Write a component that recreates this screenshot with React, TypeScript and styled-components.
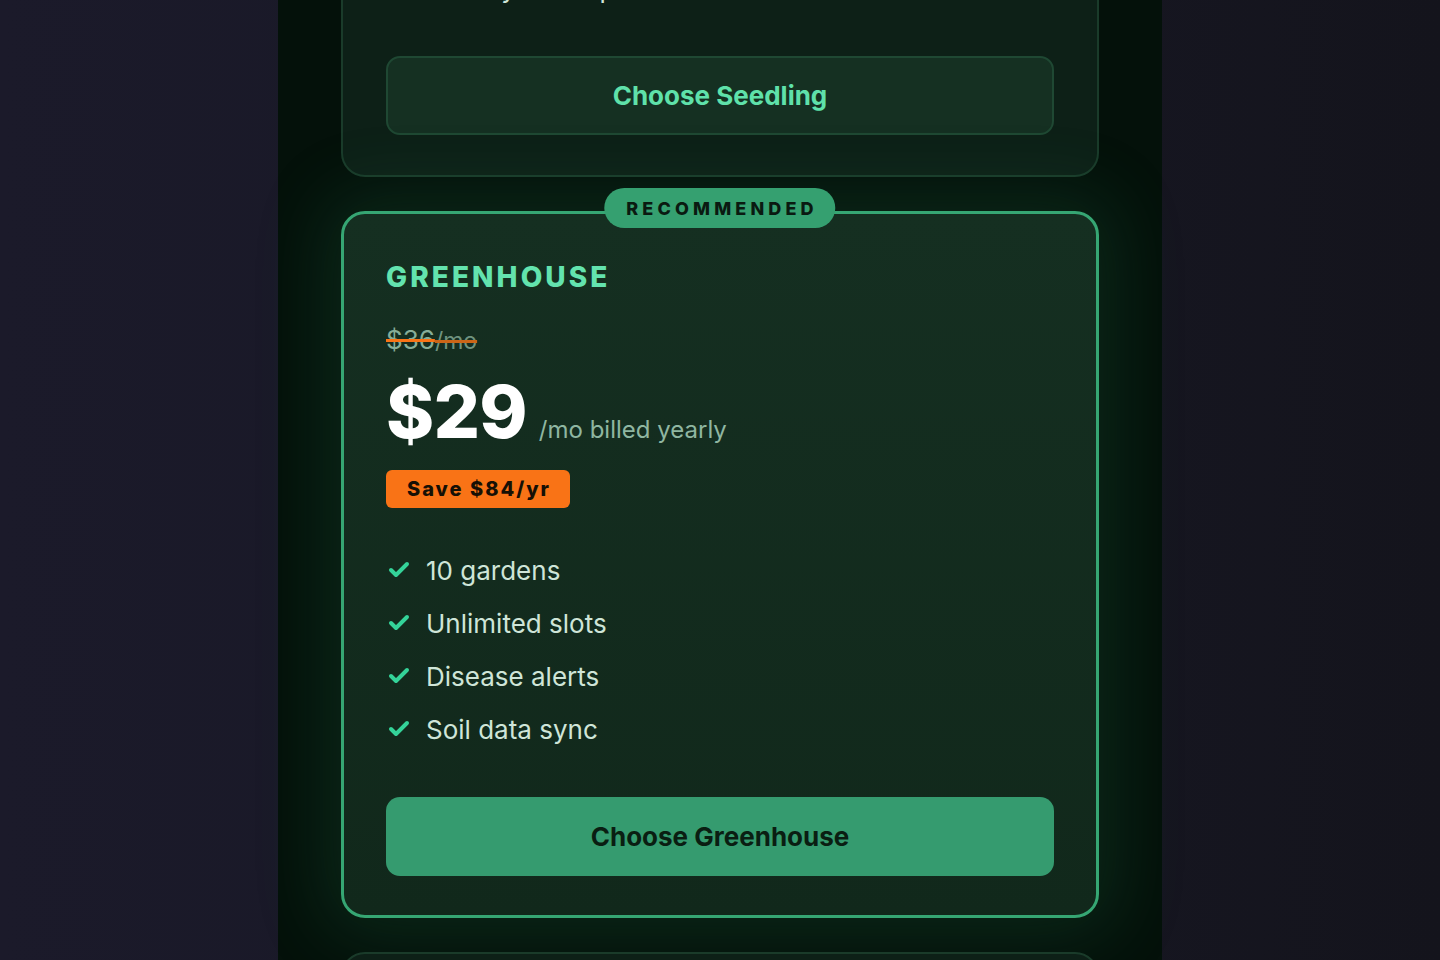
import React, { useLayoutEffect, useRef } from 'react';
import styled, { createGlobalStyle } from 'styled-components';
import { Check } from 'lucide-react';

const GlobalStyle = createGlobalStyle`
  * { box-sizing: border-box; }
  html, body { margin: 0; padding: 0; height: 100%; }
  body {
    font-family: Inter, "Noto Sans", "Liberation Sans", sans-serif;
    background: #181824;
    -webkit-font-smoothing: antialiased;
  }
  #root { height: 100%; }
`;

const Viewport = styled.div`
  height: 100vh;
  overflow-y: auto;
  scrollbar-width: none;
  background: linear-gradient(90deg, #1b1a2a 0%, #181826 50%, #14141c 100%);
  &::-webkit-scrollbar { display: none; }
`;

const Column = styled.main`
  width: 884px;
  min-height: 100%;
  margin: 0 auto;
  padding: 56px 63px 96px;
  background: #04110a;
  display: flex;
  flex-direction: column;
  gap: 34px;
`;

const PageHeading = styled.h1`
  margin: 0 0 10px;
  text-align: center;
  font-size: 34px;
  font-weight: 800;
  color: #e6f4ec;
`;

const Card = styled.section<{ $featured?: boolean }>`
  position: relative;
  display: flex;
  flex-direction: column;
  border-radius: 24px;
  padding: ${(p) => (p.$featured ? '46px 42px 39px' : '44px 43px 40px')};
  border: ${(p) => (p.$featured ? '3px solid #36a673' : '2px solid #1a3b2a')};
  background: ${(p) =>
    p.$featured ? 'linear-gradient(180deg, #152f21 0%, #11281b 100%)' : '#0d2017'};
  box-shadow: ${(p) =>
    p.$featured ? '0 0 70px 18px rgba(38, 130, 84, 0.2)' : 'none'};
`;

const Badge = styled.div`
  position: absolute;
  top: -26px;
  left: 50%;
  transform: translateX(-50%);
  height: 40px;
  padding: 0 18px 0 22px;
  border-radius: 20px;
  background: #35a070;
  color: #0a1a11;
  font-size: 18px;
  font-weight: 800;
  letter-spacing: 0.23em;
  display: flex;
  align-items: center;
  white-space: nowrap;
`;

const PlanName = styled.h2`
  margin: 0;
  font-size: 28px;
  line-height: 34px;
  font-weight: 800;
  letter-spacing: 0.11em;
  color: #63e3ae;
`;

const OldPrice = styled.div`
  margin-top: 30px;
  height: 32px;
  display: flex;
  align-items: baseline;
  line-height: 32px;
  color: #86ad98;
`;

const StrikeAmount = styled.span<{ $dim?: boolean }>`
  font-size: ${(p) => (p.$dim ? '23px' : '26px')};
  text-decoration: line-through;
  text-decoration-color: #f97316;
  text-decoration-thickness: 3px;
  opacity: ${(p) => (p.$dim ? 0.8 : 1)};
`;

const PriceRow = styled.div<{ $tight?: boolean }>`
  margin-top: ${(p) => (p.$tight ? '24px' : '20px')};
  display: flex;
  align-items: baseline;
  gap: 12px;
`;

const Amount = styled.span`
  font-size: 73px;
  line-height: 72px;
  font-weight: 800;
  letter-spacing: -0.01em;
  color: #ffffff;
`;

const Period = styled.span`
  font-size: 24px;
  color: #8fb6a1;
`;

const Savings = styled.div`
  margin-top: 22px;
  align-self: flex-start;
  height: 38px;
  padding: 0 19px 0 21px;
  border-radius: 6px;
  background: #f97316;
  color: #161005;
  font-size: 20px;
  font-weight: 800;
  letter-spacing: 0.1em;
  display: flex;
  align-items: center;
`;

const Features = styled.ul`
  list-style: none;
  margin: 44px 0 0;
  padding: 0;
  display: flex;
  flex-direction: column;
  gap: 17px;
`;

const Feature = styled.li`
  display: flex;
  align-items: center;
  gap: 15px;
  height: 36px;
  font-size: 26px;
  color: #cfe5d8;
  svg { flex: none; margin-left: 1px; }
`;

const ChooseButton = styled.button<{ $primary?: boolean }>`
  margin-top: 50px;
  height: 79px;
  width: 100%;
  border-radius: 14px;
  font-family: inherit;
  font-size: 26px;
  font-weight: 700;
  cursor: pointer;
  border: ${(p) => (p.$primary ? 'none' : '2px solid #1f4833')};
  background: ${(p) => (p.$primary ? '#359b6f' : '#153022')};
  color: ${(p) => (p.$primary ? '#0a1e12' : '#5fe1aa')};
`;

type Plan = {
  name: string;
  price: string;
  period: string;
  oldPrice?: string;
  savings?: string;
  features: string[];
  featured?: boolean;
};

const plans: Plan[] = [
  {
    name: 'SEEDLING',
    price: '$9',
    period: '/mo billed yearly',
    features: ['2 gardens', '20 slots', 'Weekly care tips'],
  },
  {
    name: 'GREENHOUSE',
    price: '$29',
    period: '/mo billed yearly',
    oldPrice: '$36',
    savings: 'Save $84/yr',
    features: ['10 gardens', 'Unlimited slots', 'Disease alerts', 'Soil data sync'],
    featured: true,
  },
  {
    name: 'ORCHARD',
    price: '$79',
    period: '/mo billed yearly',
    features: ['Unlimited gardens', 'Team seats', 'Priority support', 'API access'],
  },
];

const toTitle = (s: string) => s.charAt(0) + s.slice(1).toLowerCase();

const PlanCard = React.forwardRef<HTMLElement, { plan: Plan }>(({ plan }, ref) => (
  <Card ref={ref} $featured={plan.featured}>
    {plan.featured && <Badge>RECOMMENDED</Badge>}
    <PlanName>{plan.name}</PlanName>
    {plan.oldPrice && (
      <OldPrice>
        <StrikeAmount>{plan.oldPrice}</StrikeAmount>
        <StrikeAmount $dim>/mo</StrikeAmount>
      </OldPrice>
    )}
    <PriceRow $tight={!plan.oldPrice}>
      <Amount>{plan.price}</Amount>
      <Period>{plan.period}</Period>
    </PriceRow>
    {plan.savings && <Savings>{plan.savings}</Savings>}
    <Features>
      {plan.features.map((f) => (
        <Feature key={f}>
          <Check size={24} strokeWidth={4} color="#34d399" />
          {f}
        </Feature>
      ))}
    </Features>
    <ChooseButton $primary={plan.featured}>Choose {toTitle(plan.name)}</ChooseButton>
  </Card>
));

const App = () => {
  const viewRef = useRef<HTMLDivElement>(null);
  const featuredRef = useRef<HTMLElement>(null);

  // the shot is of the page scrolled down to the recommended plan
  useLayoutEffect(() => {
    const view = viewRef.current;
    const card = featuredRef.current;
    if (!view || !card) return;
    const offset = card.getBoundingClientRect().top - view.getBoundingClientRect().top;
    view.scrollTop += offset - 211;
  }, []);

  return (
    <>
      <GlobalStyle />
      <Viewport ref={viewRef}>
        <Column>
          <PageHeading>Pick a plan for your garden</PageHeading>
          {plans.map((plan) => (
            <PlanCard key={plan.name} plan={plan} ref={plan.featured ? featuredRef : undefined} />
          ))}
        </Column>
      </Viewport>
    </>
  );
};

export default App;
